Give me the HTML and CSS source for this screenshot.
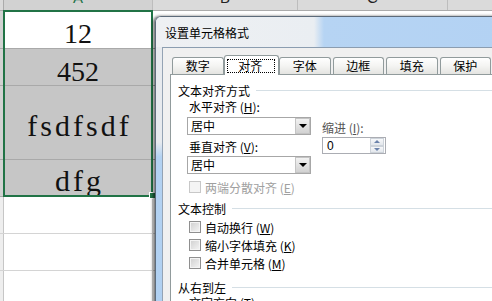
FILE: index.html
```html
<!DOCTYPE html>
<html>
<head>
<meta charset="utf-8">
<link rel="stylesheet" href="styles.css">
</head>
<body>
<div class="sheet">
  <div class="colheads">
    <div class="corner"></div>
    <div class="ch ch-a"><span>A</span></div>
    <div class="ch ch-b"><span>B</span></div>
    <div class="ch ch-c"><span>C</span></div>
    <div class="ch ch-d"></div>
  </div>
  <div class="row r1 sel"><div class="rh"></div><div class="cell">12</div><div class="rest"></div></div>
  <div class="row r2 sel"><div class="rh"></div><div class="cell">452</div><div class="rest"></div></div>
  <div class="row r3 sel"><div class="rh"></div><div class="cell txt">fsdfsdf</div><div class="rest"></div></div>
  <div class="row r4 sel"><div class="rh"></div><div class="cell txt">dfg</div><div class="rest"></div></div>
  <div class="row"><div class="rh"></div><div class="cell"></div><div class="rest"></div></div>
  <div class="row"><div class="rh"></div><div class="cell"></div><div class="rest"></div></div>
  <div class="row"><div class="rh"></div><div class="cell"></div><div class="rest"></div></div>
</div>
<div class="selbox"></div>
<div class="handle"></div>

<div class="dialog">
  <div class="titlebar">设置单元格格式</div>
  <div class="client">
    <div class="tabs">
      <div class="tab">数字</div>
      <div class="tab active"><span class="focus">对齐</span></div>
      <div class="tab">字体</div>
      <div class="tab">边框</div>
      <div class="tab">填充</div>
      <div class="tab">保护</div>
    </div>
    <div class="panel">
      <div class="sec">文本对齐方式</div>
      <div class="align">
        <div class="acol">
          <div class="lbl">水平对齐 (<u>H</u>):</div>
          <div class="combo"><span>居中</span><i class="drop"></i></div>
          <div class="lbl lv">垂直对齐 (<u>V</u>):</div>
          <div class="combo c2"><span>居中</span><i class="drop"></i></div>
        </div>
        <div class="icol">
          <div class="lbl li">缩进 (<u>I</u>):</div>
          <div class="spin"><span>0</span><div class="btns"><i class="up"></i><i class="dn"></i></div></div>
        </div>
      </div>
      <div class="chk dis"><i></i>两端分散对齐 (<u>E</u>)</div>
      <div class="sec s2">文本控制</div>
      <div class="chk k1"><i></i>自动换行 (<u>W</u>)</div>
      <div class="chk k2"><i></i>缩小字体填充 (<u>K</u>)</div>
      <div class="chk k3"><i></i>合并单元格 (<u>M</u>)</div>
      <div class="sec s3">从右到左</div>
      <div class="lbl lt">文字方向 (<u>T</u>):</div>
    </div>
  </div>
</div>
</body>
</html>
```

FILE: styles.css
```css
body {
  margin: 0;
  width: 492px;
  height: 301px;
  overflow: hidden;
  position: relative;
  background: #fff;
  font-family: "Noto Sans CJK SC", sans-serif;
}

/* ---------- spreadsheet ---------- */
.sheet {
  display: flex;
  flex-direction: column;
  height: 301px;
}
.colheads {
  display: flex;
  height: 11px;
  flex: none;
  box-sizing: border-box;
  background: #dadada;
  border-bottom: 1px solid #ababab;
  overflow: hidden;
}
.corner {
  width: 4px;
  box-sizing: border-box;
  border-right: 1px solid #ababab;
}
.ch {
  box-sizing: border-box;
  border-right: 1px solid #bdbdbd;
  display: flex;
  justify-content: center;
  align-items: flex-start;
  font: 15px "Liberation Sans", sans-serif;
  color: #222;
  overflow: hidden;
}
.ch span {
  margin-top: -11px;
  line-height: 17px;
}
.ch-a { width: 149px; color: #217346; background: #d2d2d2; }
.ch-b { width: 145px; }
.ch-c { width: 150px; }
.ch-d { flex: 1; border-right: none; }

.row {
  display: flex;
  flex: none;
  height: 37px;
  box-sizing: border-box;
  border-bottom: 1px solid #d4d4d4;
}
.row.r1 { height: 38px; }
.row.r3 { height: 74px; }
.row.sel { border-bottom-color: #a9a9a9; }
.rh {
  width: 4px;
  box-sizing: border-box;
  border-right: 1px solid #c6c6c6;
  background: #eeeeee;
}
.row.sel .rh { background: #d2d2d2; }
.cell {
  width: 149px;
  box-sizing: border-box;
  border-right: 1px solid #d4d4d4;
  display: flex;
  align-items: center;
  justify-content: center;
  padding-top: 9px;
  font: 28px "Liberation Serif", serif;
  color: #111;
}
.row.sel .cell { background: #c6c6c6; }
.row.r1 .cell { background: #fff; }
.cell.txt {
  font-size: 30px;
  letter-spacing: 3px;
  padding-left: 3px;
  padding-top: 6px;
}
.rest { flex: 1; }

.selbox {
  position: absolute;
  left: 3px;
  top: 10px;
  width: 150px;
  height: 187px;
  box-sizing: border-box;
  border: 2px solid #217346;
}
.handle {
  position: absolute;
  left: 149px;
  top: 192px;
  width: 7px;
  height: 7px;
  box-sizing: border-box;
  background: #217346;
  border: 1px solid #fff;
}

/* ---------- dialog ---------- */
.dialog {
  position: absolute;
  left: 155px;
  top: 16px;
  width: 345px;
  height: 300px;
  box-sizing: border-box;
  display: flex;
  flex-direction: column;
  border: 1px solid #5d6b7a;
  border-right: none;
  border-bottom: none;
  border-top-left-radius: 6px;
  background: linear-gradient(to bottom, #e7eaee 0, #e7eaee 125px, #b3d2f2 140px, #b0d0f1 100%);
  box-shadow: -2px 0 3px rgba(0, 0, 0, 0.55);
}
.titlebar {
  height: 30px;
  flex: none;
  display: flex;
  align-items: center;
  padding-left: 9px;
  font-size: 12px;
  color: #000;
  border-top-left-radius: 5px;
  background: linear-gradient(to right, #eef0f3 0, #eaeef2 158px, #b6d4f3 168px, #b3d2f3 100%);
}
.client {
  flex: 1;
  margin-left: 6px;
  display: flex;
  flex-direction: column;
  background: #f0f0f0;
  border-left: 1px solid #94a3b4;
  border-top: 1px solid #8b9db0;
}

.tabs {
  display: flex;
  align-items: flex-end;
  gap: 2px;
  height: 26px;
  flex: none;
  padding-left: 9px;
}
.tab {
  width: 51.5px;
  height: 17px;
  flex: none;
  box-sizing: border-box;
  border: 1px solid #919b9c;
  border-bottom: none;
  border-radius: 3px 3px 0 0;
  background: linear-gradient(to bottom, #ffffff 0, #f4f4f2 50%, #e4e4e1 100%);
  font-size: 12px;
  line-height: 16px;
  text-align: center;
  color: #000;
}
.tab.active {
  width: 55.5px;
  height: 20px;
  margin: 0 -2px -1px;
  position: relative;
  z-index: 1;
  background: #fff;
  display: flex;
  align-items: center;
  justify-content: center;
  padding-top: 1px;
}
.focus {
  border: 1px dotted #000;
  line-height: 12px;
  padding: 0 12px 0 10px;
}

.panel {
  flex: 1;
  margin-left: 7px;
  background: #fff;
  border: 1px solid #919b9c;
  border-right: none;
  border-bottom: none;
  padding: 7px 0 0 7px;
  display: flex;
  flex-direction: column;
  font-size: 12px;
  color: #000;
}
.sec {
  display: flex;
  align-items: center;
  height: 16px;
  flex: none;
}
.sec::after {
  content: "";
  flex: 1;
  margin-left: 6px;
  border-top: 1px solid #d5dfe5;
}
.sec.s2 { margin-top: 5px; }
.sec.s3 { margin-top: 8px; }

.align { display: flex; flex: none; }
.acol { display: flex; flex-direction: column; }
.lbl {
  height: 17px;
  line-height: 17px;
  margin-left: 11px;
  white-space: nowrap;
  flex: none;
}
.lbl.lv { margin-top: 3px; }
.lbl.lt { height: 16px; line-height: 16px; }

.combo {
  margin-left: 9px;
  margin-top: 2px;
  width: 124px;
  height: 18px;
  box-sizing: border-box;
  border: 1px solid #a7a7a7;
  background: #fff;
  display: flex;
  align-items: center;
  padding-left: 3px;
}
.combo.c2 { margin-top: 1px; }
.combo span { flex: 1; line-height: 16px; }
.drop {
  width: 15px;
  height: 16px;
  box-sizing: border-box;
  border: 1px solid #c4c4c4;
  background: linear-gradient(to bottom, #f2f2f2, #d2d2d2);
  display: flex;
  align-items: center;
  justify-content: center;
}
.drop::after {
  content: "";
  border-left: 4px solid transparent;
  border-right: 4px solid transparent;
  border-top: 4px solid #000;
}

.icol {
  margin-left: 11px;
  display: flex;
  flex-direction: column;
}
.lbl.li {
  margin-left: 0;
  margin-top: 22px;
  height: 16px;
  line-height: 16px;
  color: #555;
}
.spin {
  margin-top: 1px;
  width: 64px;
  height: 17px;
  box-sizing: border-box;
  border: 1px solid #abadb3;
  display: flex;
  align-items: center;
  padding-left: 4px;
  font-family: "Liberation Sans", sans-serif;
}
.spin span { flex: 1; }
.btns {
  width: 14px;
  height: 15px;
  margin-right: 1px;
  display: flex;
  flex-direction: column;
}
.btns i {
  flex: 1;
  box-sizing: border-box;
  border: 1px solid #cdd3da;
  background: linear-gradient(to bottom, #f7f8fa, #e3e7ec);
  display: flex;
  align-items: center;
  justify-content: center;
}
.btns .up::after {
  content: "";
  border-left: 3px solid transparent;
  border-right: 3px solid transparent;
  border-bottom: 3px solid #6c83ab;
}
.btns .dn::after {
  content: "";
  border-left: 3px solid transparent;
  border-right: 3px solid transparent;
  border-top: 3px solid #6c83ab;
}

.chk {
  display: flex;
  align-items: center;
  height: 16px;
  flex: none;
  margin-left: 11px;
  margin-top: 2px;
  white-space: nowrap;
}
.chk i {
  width: 12px;
  height: 12px;
  margin-right: 4px;
  box-sizing: border-box;
  border: 1px solid #8f8f8f;
  background: linear-gradient(135deg, #cfcfcf, #f5f5f5);
  box-shadow: inset 0 0 0 1px #f4f4f4;
}
.chk.dis { margin-top: 5px; color: #a0a0a0; }
.chk.dis i { border-color: #c8c8c8; background: #f4f4f4; box-shadow: none; }
.chk.k1 { margin-top: 3px; }
```
